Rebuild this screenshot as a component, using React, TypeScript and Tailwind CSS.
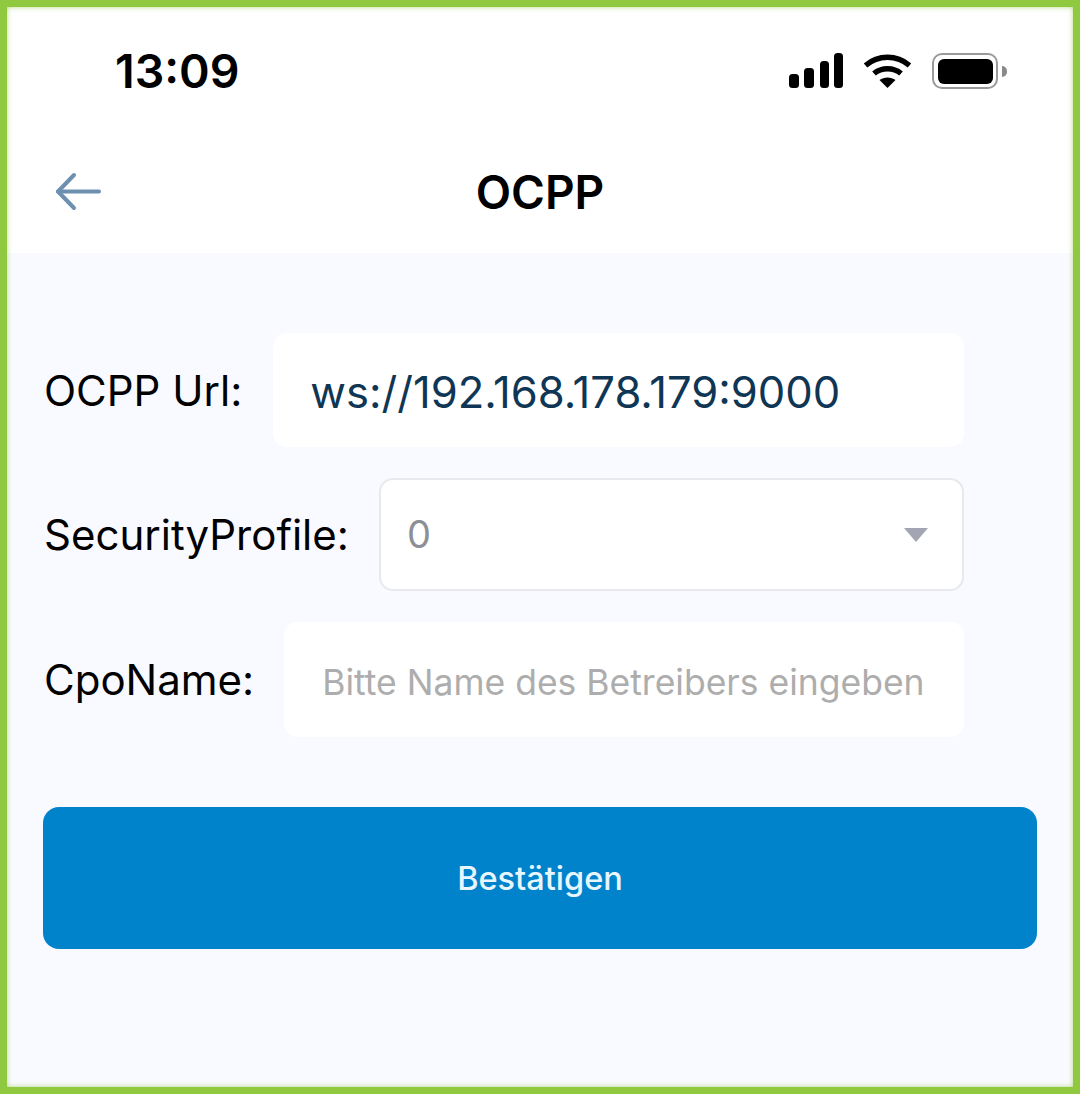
function SignalIcon() {
  return (
    <svg width="54" height="36" viewBox="0 0 54 36" fill="#000">
      <rect x="0" y="21" width="10" height="14" rx="3.5" />
      <rect x="15" y="15" width="10" height="20" rx="3.5" />
      <rect x="31" y="8" width="9" height="27" rx="3.5" />
      <rect x="45" y="0" width="9" height="35" rx="3.5" />
    </svg>
  )
}

function WifiIcon() {
  return (
    <svg width="47" height="36" viewBox="0 0 47 36" fill="none" stroke="#000" strokeWidth="5.5">
      <path d="M1.500 12.500C14 1.500 33 1.500 45.500 12.500" />
      <path d="M10 20.500C17.500 14 29.500 14 37 20.500" />
      <path d="M23.500 35L15.500 27C20 23.500 27 23.500 31.500 27Z" fill="#000" stroke="none" />
    </svg>
  )
}

function BatteryIcon() {
  return (
    <div className="flex items-center gap-[4px]">
      <div className="flex h-[36px] w-[66px] items-center justify-center rounded-[10px] border-[2px] border-[#9a9a9a] bg-white">
        <div className="h-[25px] w-[55px] rounded-[6px] bg-black" />
      </div>
      <div className="h-[11px] w-[5px] rounded-r-full bg-[#8a8a8a]" />
    </div>
  )
}

function BackArrow() {
  return (
    <svg width="46" height="40" viewBox="0 0 46 40" fill="none" stroke="#6e90b0" strokeWidth="4" strokeLinecap="round" strokeLinejoin="round">
      <path d="M44 19.500H3" />
      <path d="M19 3L3 19.500L19 36" />
    </svg>
  )
}

export default function App() {
  return (
    <div className="relative h-[1094px] w-[1080px] border-[7px] border-[#90c83f] bg-[#f9faff] font-['Inter',sans-serif] text-black">
      <div className="h-[246px] bg-white">
        <div className="flex h-[128px] items-center justify-between pr-[66px] pl-[108px]">
          <span className="text-[46.500px] leading-none font-semibold">13:09</span>
          <div className="flex items-center gap-[21px]">
            <SignalIcon />
            <WifiIcon />
            <BatteryIcon />
          </div>
        </div>
        <div className="relative flex h-[118px] items-center justify-center pb-[4px]">
          <div className="absolute top-[37px] left-[48px]">
            <BackArrow />
          </div>
          <h1 className="text-[46px] leading-none font-semibold">OCPP</h1>
        </div>
      </div>

      <div className="flex flex-col gap-[31px] pt-[80px] pr-[109px] pl-[37px]">
        <div className="flex items-center gap-[31px]">
          <label className="pt-[2px] text-[42px] leading-none whitespace-nowrap">OCPP Url:</label>
          <div className="flex h-[114px] flex-1 items-center rounded-[14px] bg-white pt-[6px] pl-[37px] text-[43.600px] text-[#0f3654]">
            ws://192.168.178.179:9000
          </div>
        </div>
        <div className="flex items-center gap-[30px]">
          <label className="text-[42px] leading-none whitespace-nowrap">SecurityProfile:</label>
          <div className="flex h-[113px] flex-1 items-center justify-between rounded-[14px] border-2 border-[#e8e9ef] bg-white pr-[33px] pl-[26px] text-[38px] text-[#8c8f96]">
            <span>0</span>
            <svg width="26" height="16" viewBox="0 0 26 16" fill="#a3a5b3">
              <path d="M1 1H25L13 15Z" />
            </svg>
          </div>
        </div>
        <div className="flex items-center gap-[30px]">
          <label className="text-[42px] leading-none whitespace-nowrap">CpoName:</label>
          <div className="flex h-[115px] flex-1 items-center rounded-[14px] bg-white pt-[7px] pl-[38px] text-[35.500px] whitespace-nowrap text-[#adadad]">
            Bitte Name des Betreibers eingeben
          </div>
        </div>
      </div>

      <div className="px-[36px] pt-[70px]">
        <button className="h-[142px] w-full rounded-[16px] bg-[#0083cb] pt-[2px] text-[32.500px] font-medium text-[#e8f6ff]">
          Bestätigen
        </button>
      </div>

      <div className="pointer-events-none absolute inset-0 shadow-[inset_0_0_5px_rgba(144,200,63,0.7)]" />
    </div>
  )
}
